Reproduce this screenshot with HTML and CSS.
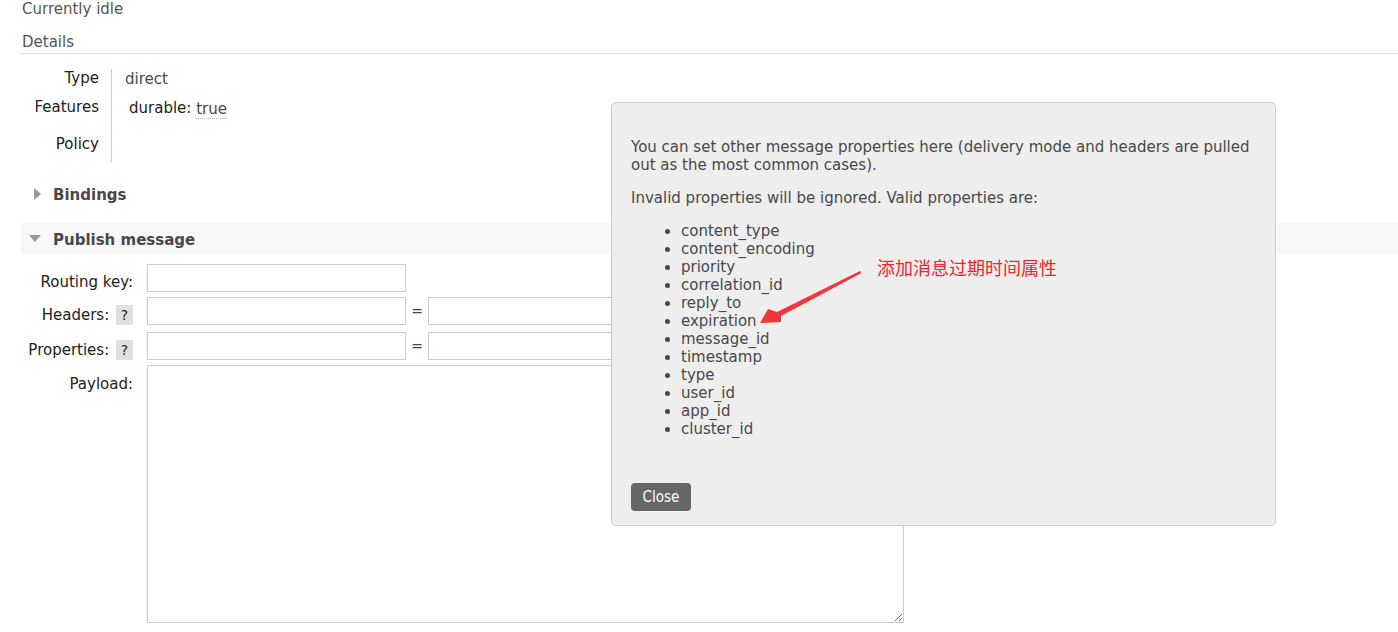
FILE: index.html
```html
<!DOCTYPE html>
<html>
<head>
<meta charset="utf-8">
<link rel="stylesheet" href="styles.css">
</head>
<body>
<div class="page">
  <div class="idle">Currently idle</div>
  <div class="details-title">Details</div>
  <div class="facts">
    <div class="facts-labels">
      <div class="fl fl-type">Type</div>
      <div class="fl fl-features">Features</div>
      <div class="fl fl-policy">Policy</div>
    </div>
    <div class="facts-values">
      <div class="fv fv-type">direct</div>
      <div class="fv fv-features"><span class="key">durable:</span> <span class="val">true</span></div>
    </div>
  </div>

  <div class="section closed">
    <span class="tri tri-right"></span><span class="section-title">Bindings</span>
  </div>

  <div class="section open">
    <span class="tri tri-down"></span><span class="section-title">Publish message</span>
  </div>

  <div class="form">
    <div class="row row-key">
      <div class="label">Routing key:</div>
      <input class="inp" type="text">
    </div>
    <div class="row row-headers">
      <div class="label">Headers: <span class="help">?</span></div>
      <input class="inp" type="text">
      <span class="eq">=</span>
      <input class="inp inp2" type="text">
    </div>
    <div class="row row-props">
      <div class="label">Properties: <span class="help">?</span></div>
      <input class="inp" type="text">
      <span class="eq">=</span>
      <input class="inp inp2" type="text">
    </div>
    <div class="row row-payload">
      <div class="label">Payload:</div>
      <textarea class="payload"></textarea>
    </div>
  </div>

  <div class="popup">
    <p class="p1">You can set other message properties here (delivery mode and headers are pulled out as the most common cases).</p>
    <p class="p2">Invalid properties will be ignored. Valid properties are:</p>
    <ul>
      <li>content_type</li>
      <li>content_encoding</li>
      <li>priority</li>
      <li>correlation_id</li>
      <li>reply_to</li>
      <li>expiration</li>
      <li>message_id</li>
      <li>timestamp</li>
      <li>type</li>
      <li>user_id</li>
      <li>app_id</li>
      <li>cluster_id</li>
    </ul>
    <button class="close">Close</button>
  </div>

  <div class="note">添加消息过期时间属性</div>
  <svg class="arrow" width="110" height="60" viewBox="0 0 110 60">
    <polygon points="101,2 102.5,4 22,47 22,53 1,54 9,40 18,43" fill="#f0383c"/>
  </svg>
</div>
</body>
</html>
```

FILE: styles.css
```css
html, body {
  margin: 0;
  padding: 0;
  background: #fff;
}
body {
  font-family: "DejaVu Sans", Verdana, sans-serif;
  font-size: 15px;
  color: #484848;
}
.page {
  position: relative;
  width: 1398px;
  height: 632px;
  overflow: hidden;
  padding-left: 21px;
  box-sizing: border-box;
}
.idle {
  padding-left: 1px;
  height: 18px;
  line-height: 18px;
  color: #555;
}
.details-title {
  margin-top: 15px;
  padding-left: 1px;
  line-height: 18px;
  color: #555;
  padding-bottom: 2px;
  border-bottom: 1px solid #ddd;
}
.facts {
  display: flex;
  margin-top: 15px;
}
.facts-labels {
  width: 91px;
  border-right: 1px solid #ccc;
  text-align: right;
  height: 93px;
  box-sizing: border-box;
}
.fl {
  color: #222;
  padding-right: 12px;
  line-height: 18px;
}
.fl-features { margin-top: 11px; }
.fl-policy { margin-top: 19px; }
.facts-values {
  padding-left: 13px;
}
.fv { line-height: 18px; }
.fv-type { margin-top: 1px; color: #484860; }
.fv-features { margin-top: 11px; padding-left: 4px; }
.fv-features .key { color: #222; }
.fv-features .val {
  color: #484848;
  border-bottom: 1px dotted #bbb;
  position: relative;
  top: 1px;
}
.section {
  display: flex;
  align-items: center;
  height: 31px;
  font-weight: bold;
  font-size: 15px;
  color: #484848;
}
.section.closed {
  margin-top: 16px;
  padding-left: 13px;
}
.section.open {
  margin-top: 14px;
  background: #f8f8f8;
  padding-left: 8px;
}
.section-title {
  position: relative;
  top: 1px;
}
.tri {
  display: inline-block;
  width: 0;
  height: 0;
}
.tri-right {
  border-top: 6px solid transparent;
  border-bottom: 6px solid transparent;
  border-left: 7px solid #999;
  margin-right: 12px;
}
.tri-down {
  border-left: 6px solid transparent;
  border-right: 6px solid transparent;
  border-top: 7px solid #999;
  margin-right: 12px;
}
.form {
  margin-top: 10px;
}
.row {
  display: flex;
  align-items: center;
}
.row-key { margin-bottom: 5px; }
.row-headers { margin-bottom: 7px; }
.row-props { margin-bottom: 5px; }
.label {
  width: 112px;
  text-align: right;
  color: #222;
  margin-right: 14px;
  position: relative;
  top: 4px;
}
.help {
  display: inline-block;
  background: #e0e0e0;
  width: 17px;
  height: 20px;
  line-height: 20px;
  text-align: center;
  color: #222;
  margin-left: 2px;
  vertical-align: middle;
  font-size: 14px;
}
.inp {
  width: 259px;
  height: 28px;
  border: 1px solid #ccc;
  box-sizing: border-box;
  margin: 0;
  padding: 0;
  font: inherit;
}
.eq {
  width: 22px;
  text-align: center;
  color: #444;
  font-size: 14px;
}
.inp2 { width: 300px; }
.row-payload {
  align-items: flex-start;
}
.row-payload .label {
  top: 0;
  margin-top: 10px;
}
.payload {
  width: 757px;
  height: 258px;
  border: 1px solid #ccc;
  box-sizing: border-box;
  margin: 0;
  padding: 0;
  resize: both;
}
.popup {
  position: absolute;
  left: 611px;
  top: 102px;
  width: 665px;
  height: 424px;
  box-sizing: border-box;
  background: #eeeeee;
  border: 1px solid #ccc;
  border-radius: 5px;
  padding: 35px 19px 0 19px;
  color: #484848;
}
.popup p {
  margin: 0 0 15px 0;
  line-height: 18px;
}
.popup ul {
  margin: 0;
  padding-left: 50px;
  line-height: 18px;
}
.close {
  margin-top: 45px;
  background: #666;
  color: #fff;
  border: none;
  border-radius: 4px;
  width: 60px;
  height: 28px;
  font-family: "DejaVu Sans Condensed", "DejaVu Sans", sans-serif;
  font-size: 15px;
  padding: 0;
}
.note {
  position: absolute;
  left: 877px;
  top: 256px;
  font-family: "Noto Sans CJK SC", sans-serif;
  font-size: 18px;
  color: #f5232c;
  line-height: 22px;
}
.arrow {
  position: absolute;
  left: 759px;
  top: 269px;
}
```
